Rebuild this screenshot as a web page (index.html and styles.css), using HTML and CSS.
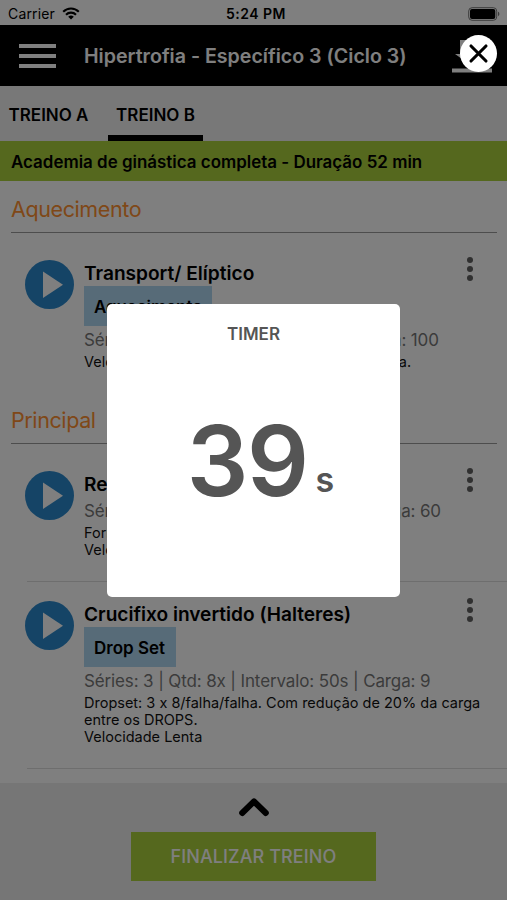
FILE: index.html
```html
<!doctype html>
<html lang="pt-BR">

<head>
  <meta charset="utf-8" />
  <meta name="viewport" content="width=device-width, initial-scale=1.0" />
  <title>Treino</title>
  <link rel="stylesheet" href="styles.css">
</head>

<body>
  <div class="app">
    <div class="status-bar">
      <div class="carrier">
        <span>Carrier</span>
        <svg class="wifi" viewBox="0 0 18 13" width="18" height="13">
          <path d="M1.2 4.8a11 11 0 0 1 15.6 0M4 7.7a7 7 0 0 1 10 0" fill="none" stroke="#000" stroke-width="2.1" />
          <path d="M9 12.6 6.2 9.8a4 4 0 0 1 5.6 0z" />
        </svg>
      </div>
      <span class="clock">5:24 PM</span>
      <svg class="battery" viewBox="0 0 32 14" width="32" height="14">
        <rect x=".7" y=".7" width="28" height="12.6" rx="3.4" fill="none" stroke="#777" stroke-width="1" />
        <rect x="2" y="2" width="25.3" height="10" rx="2" />
        <path d="M30 4.8c1.8.6 1.8 3.8 0 4.4z" fill="#777" />
      </svg>
    </div>

    <header class="navbar">
      <button class="menu" aria-label="Menu"><span></span><span></span><span></span></button>
      <h1>Hipertrofia - Específico 3 (Ciclo 3)</h1>
      <svg class="download" viewBox="0 0 40 34" width="40" height="34">
        <path d="M8 1h24v14h5L20 27 3 15h5zM0 29.5h40v4H0z" fill="#fff" />
      </svg>
    </header>

    <nav class="tabs">
      <a class="tab">TREINO A</a>
      <a class="tab active">TREINO B</a>
    </nav>

    <div class="banner">Academia de ginástica completa - Duração 52 min</div>

    <main>
      <h2>Aquecimento</h2>
      <div class="list">
        <div class="exercise">
          <svg class="play" viewBox="0 0 49 49"><circle cx="24.5" cy="24.5" r="24.5" /><path d="M18 11.5 38 24.7 18 38z" /></svg>
          <div class="info">
            <h3>Transport/ Elíptico</h3>
            <span class="tag tag-warmup">Aquecimento</span>
            <p class="sets">Séries: 3 | Qtd: 8 | Intervalo: 50s | Carga: 100</p>
            <p class="notes">Velocidade moderada, e intensidade moderada.</p>
          </div>
          <div class="dots"><i></i><i></i><i></i></div>
        </div>
      </div>

      <h2>Principal</h2>
      <div class="list">
        <div class="exercise">
          <svg class="play" viewBox="0 0 49 49"><circle cx="24.5" cy="24.5" r="24.5" /><path d="M18 11.5 38 24.7 18 38z" /></svg>
          <div class="info">
            <h3>Remada baixa</h3>
            <p class="sets">Séries: 3 | Qtd: 8x | Intervalo: 50s | Carga: 60</p>
            <p class="notes">Forma correta<br>Velocidade Lenta</p>
          </div>
          <div class="dots"><i></i><i></i><i></i></div>
        </div>
        <div class="exercise">
          <svg class="play" viewBox="0 0 49 49"><circle cx="24.5" cy="24.5" r="24.5" /><path d="M18 11.5 38 24.7 18 38z" /></svg>
          <div class="info">
            <h3>Crucifixo invertido (Halteres)</h3>
            <span class="tag tag-drop">Drop Set</span>
            <p class="sets">Séries: 3 | Qtd: 8x | Intervalo: 50s | Carga: 9</p>
            <p class="notes">Dropset: 3 x 8/falha/falha. Com redução de 20% da carga<br>entre os DROPS.<br>Velocidade Lenta</p>
          </div>
          <div class="dots"><i></i><i></i><i></i></div>
        </div>
      </div>
    </main>

    <footer>
      <svg class="chevron" viewBox="0 0 30 20" width="30" height="20">
        <path d="M3.2 16 15 4.5 26.8 16" fill="none" stroke="#000" stroke-width="6" stroke-linecap="round" stroke-linejoin="round" />
      </svg>
      <button class="finish">FINALIZAR TREINO</button>
    </footer>
  </div>

  <div class="overlay">
    <button class="close" aria-label="Fechar">
      <svg viewBox="0 0 37 37" width="37" height="37">
        <path d="M11 11 26 26M26 11 11 26" stroke="#000" stroke-width="3.1" stroke-linecap="round" />
      </svg>
    </button>
    <div class="timer">
      <h4>TIMER</h4>
      <div class="time"><span class="value">39</span><span class="unit">s</span></div>
    </div>
  </div>
</body>

</html>
```
FILE: styles.css
```css
* {
  box-sizing: border-box;
}

body {
  margin: 0;
  font-family: Inter, Roboto, sans-serif;
  font-feature-settings: "calt" 0;
  color: #000;
  background: #fff;
  overflow: hidden;
}

h1, h2, h3, h4, p {
  margin: 0;
  white-space: nowrap;
}

button {
  border: 0;
  padding: 0;
  font-family: inherit;
}

.app {
  height: 900px;
  display: flex;
  flex-direction: column;
}

.status-bar {
  height: 25px;
  padding: 2px 7px 0 8px;
  display: grid;
  grid-template-columns: 1fr auto 1fr;
  align-items: center;
  font-size: 14px;
}

.carrier {
  display: flex;
  align-items: center;
  gap: 7px;
  letter-spacing: 0.15px;
}

.clock {
  padding-left: 4px;
  font-weight: 600;
  letter-spacing: 0.5px;
}

.battery {
  justify-self: end;
}

.navbar {
  height: 61px;
  background: #000;
  display: flex;
  align-items: center;
  padding: 0 15px 0 19px;
}

.menu {
  width: 37px;
  background: none;
  display: grid;
  gap: 6px;
}

.menu span {
  height: 4px;
  background: #fff;
}

h1 {
  flex: 1;
  margin-left: 28px;
  padding-top: 1px;
  font-size: 19.6px;
  font-weight: 600;
  color: #fff;
}

.tabs {
  height: 55px;
  background: #f0f0f0;
  display: flex;
  gap: 12px;
  padding-left: 1px;
}

.tab {
  width: 95px;
  height: 55px;
  padding-top: 2px;
  display: flex;
  align-items: center;
  justify-content: center;
  font-size: 17px;
  font-weight: 600;
}

.tab.active {
  border-bottom: 6px solid #000;
  padding-top: 8px;
}

.banner {
  height: 40px;
  background: #aad03c;
  padding-left: 11px;
  line-height: 42px;
  font-size: 16.95px;
  font-weight: 600;
}

main {
  flex: 1;
}

h2 {
  height: 52px;
  margin: 0 10px 0 11px;
  border-bottom: 1px solid #9a9a9a;
  line-height: 57px;
  font-size: 21.5px;
  font-weight: 400;
  letter-spacing: -0.4px;
  color: #ff9030;
}

.list {
  padding: 8px 0 0 27px;
}

.exercise {
  display: flex;
  padding: 19px 0 22px;
  border-bottom: 1px solid #dcdcdc;
}

.exercise + .exercise {
  padding-bottom: 23px;
}

.list:first-of-type .exercise {
  border-bottom: 0;
}

.play {
  flex-shrink: 0;
  width: 49px;
  height: 49px;
  margin-left: -2px;
  fill: #2a88cc;
}

.play path {
  fill: #fff;
}

.info {
  flex: 1;
  min-width: 0;
  margin-left: 10px;
}

h3 {
  height: 28px;
  line-height: 26px;
  font-size: 19.1px;
  font-weight: 600;
}

.tag {
  display: block;
  height: 40px;
  margin: -2px 0 2px;
  padding: 0 10px;
  background: #aed6f1;
  line-height: 42px;
  font-size: 17px;
  font-weight: 600;
  white-space: nowrap;
}

.tag-warmup {
  width: 128px;
  letter-spacing: -0.1px;
}

.tag-drop {
  width: 92px;
}

.sets {
  height: 22px;
  line-height: 24px;
  font-size: 17px;
  letter-spacing: -0.13px;
  color: #777;
}

.notes {
  margin-top: 3px;
  line-height: 17.2px;
  font-size: 14.5px;
  color: #111;
}

.dots {
  width: 7px;
  margin: -3px 33px 0 0;
  display: flex;
  flex-direction: column;
  gap: 3px;
}

.dots i {
  width: 6px;
  height: 6px;
  border-radius: 50%;
  background: #606060;
}

footer {
  height: 117px;
  background: #ececec;
  display: flex;
  flex-direction: column;
  align-items: center;
  padding-top: 14px;
}

.finish {
  width: 245px;
  height: 49px;
  margin-top: 15px;
  background: #aad03c;
  color: #fff;
  font-size: 18px;
  font-weight: 500;
  letter-spacing: 0.1px;
}

.overlay {
  position: fixed;
  inset: 0;
  background: rgba(0, 0, 0, 0.5);
  display: flex;
  align-items: center;
  justify-content: center;
}

.close {
  position: absolute;
  top: 35px;
  right: 10px;
  width: 37px;
  height: 37px;
  border-radius: 50%;
  background: #fff;
}

.timer {
  width: 293px;
  height: 293px;
  border-radius: 5px;
  background: #fff;
  color: #555;
  text-align: center;
}

h4 {
  padding-top: 20px;
  line-height: 20px;
  font-size: 17px;
  font-weight: 600;
}

.time {
  display: flex;
  align-items: baseline;
  justify-content: center;
  gap: 8px;
  line-height: 120px;
  margin-top: 57px;
  padding-left: 14px;
}

.value {
  font-size: 97px;
  font-weight: 600;
  letter-spacing: -1.5px;
}

.unit {
  font-size: 34px;
  font-weight: 600;
  line-height: 1;
  transform: translateY(-4px);
}
```
